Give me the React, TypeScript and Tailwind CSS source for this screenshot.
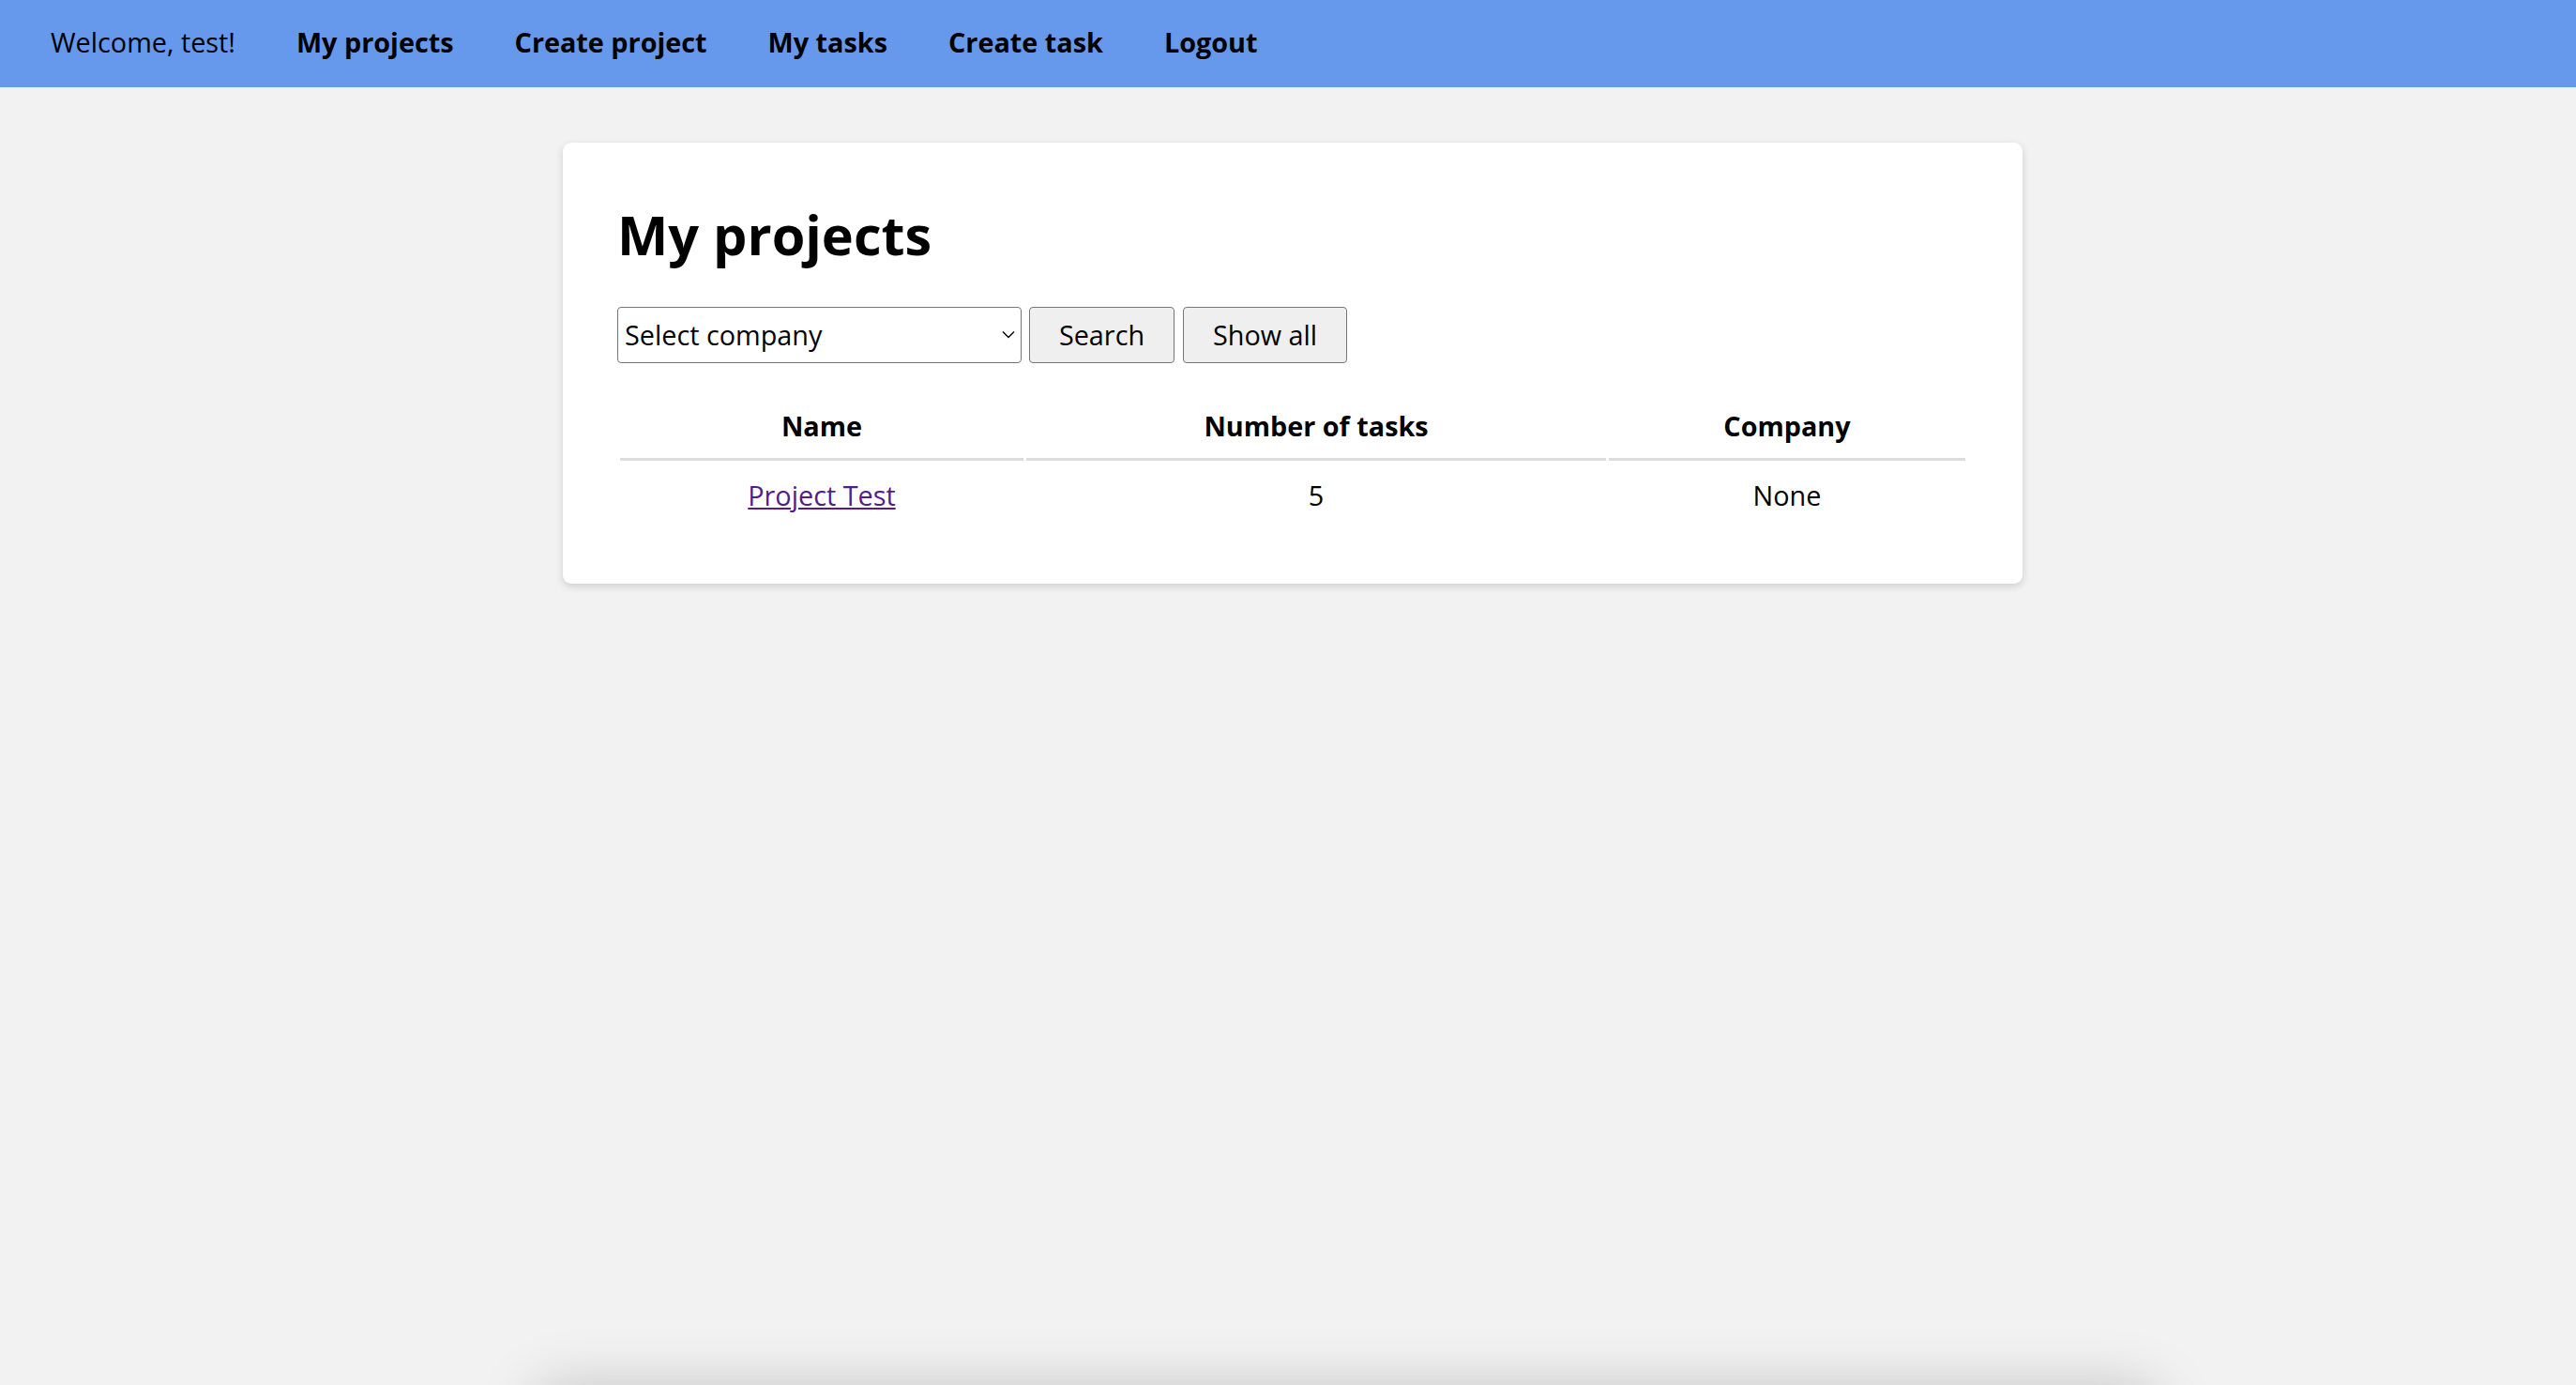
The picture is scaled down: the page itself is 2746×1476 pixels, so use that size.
export default function App() {
  return (
    <div className="min-h-screen overflow-hidden bg-[#f2f2f2] font-['Open_Sans',sans-serif] text-black">
      <nav className="flex h-[93px] items-center gap-[65px] bg-[#6698ec] pb-[4px] pl-[54px] text-[28.8px] leading-[39px]">
        <span>Welcome, test!</span>
        <a className="font-bold">My projects</a>
        <a className="font-bold">Create project</a>
        <a className="font-bold">My tasks</a>
        <a className="font-bold">Create task</a>
        <a className="font-bold">Logout</a>
      </nav>
      <main className="pt-[59px]">
        <div className="ml-[600px] w-[1556px] rounded-[9px] bg-white px-[58px] pt-[59px] pb-[58px] shadow-[0_3px_8px_rgba(0,0,0,0.15)]">
          <h1 className="mb-[38px] text-[57.6px] font-bold leading-[78px]">My projects</h1>
          <div className="flex items-center">
            <div className="relative h-[60px] w-[431px]">
              <select className="h-full w-full appearance-none rounded-[4px] border border-[#767676] bg-white pl-[7px] text-[28.8px] text-black outline-none">
                <option>Select company</option>
              </select>
              <svg
                className="pointer-events-none absolute right-[7px] top-[25px]"
                width="14"
                height="9"
                viewBox="0 0 14 9"
                fill="none"
              >
                <path d="M1 1.5 L7 7.5 L13 1.5" stroke="#000" strokeWidth="1.4" />
              </svg>
            </div>
            <button className="ml-[8px] h-[60px] w-[155px] rounded-[4px] border border-[#767676] bg-[#efefef] text-[28.8px] text-black">
              Search
            </button>
            <button className="ml-[9px] h-[60px] w-[175px] rounded-[4px] border border-[#767676] bg-[#efefef] text-[28.8px] text-black">
              Show all
            </button>
          </div>
          <table className="mt-[29px] w-[1440px] table-fixed border-separate border-spacing-[3px] text-[28.8px] leading-[39px]">
            <thead>
              <tr>
                <th className="w-[430px] border-b-[3px] border-[#dddddd] py-[15px] text-center font-bold">Name</th>
                <th className="w-[618px] border-b-[3px] border-[#dddddd] py-[15px] text-center font-bold">Number of tasks</th>
                <th className="w-[380px] border-b-[3px] border-[#dddddd] py-[15px] text-center font-bold">Company</th>
              </tr>
            </thead>
            <tbody>
              <tr>
                <td className="py-[14px] text-center">
                  <a className="text-[#551a8b] underline">Project Test</a>
                </td>
                <td className="py-[14px] text-center">5</td>
                <td className="py-[14px] text-center">None</td>
              </tr>
            </tbody>
          </table>
        </div>
        <div className="ml-[575px] mt-[860px] h-[200px] w-[1720px] bg-[#f2f2f2] shadow-[0_0_60px_rgba(0,0,0,0.22)]"></div>
      </main>
    </div>
  );
}
